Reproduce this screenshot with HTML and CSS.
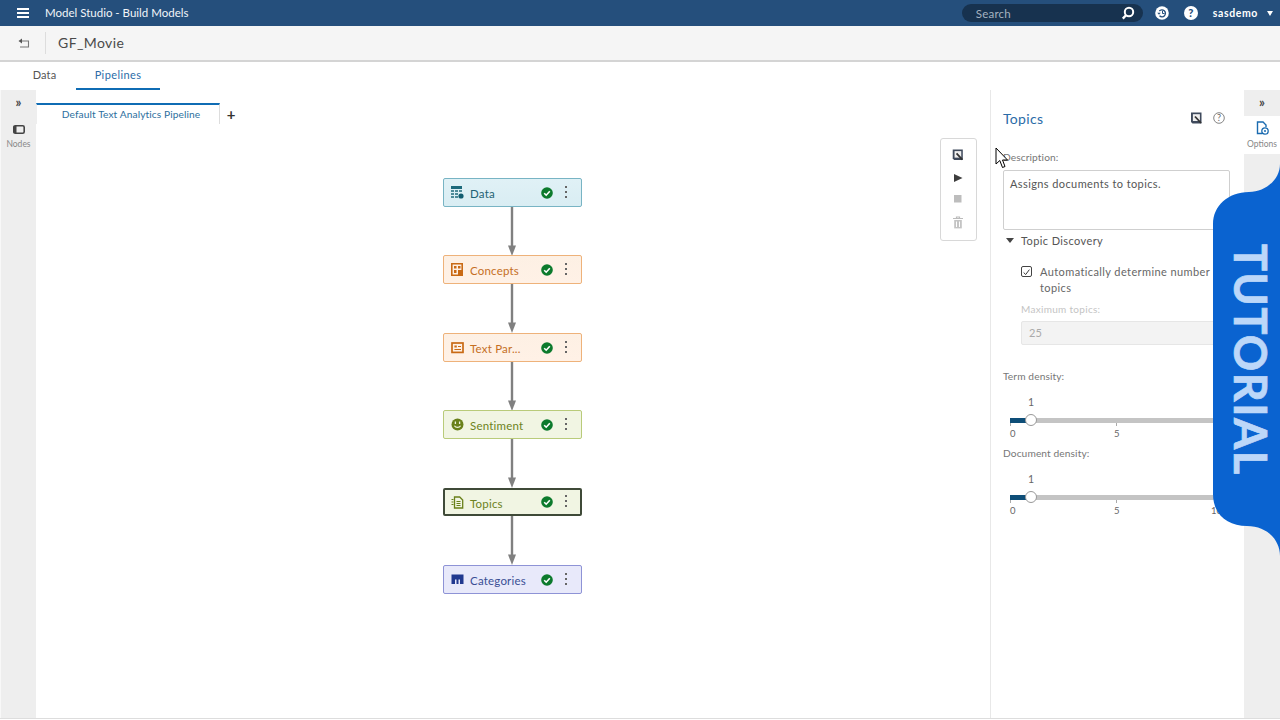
FILE: index.html
```html
<!DOCTYPE html>
<html lang="en">
<head>
<meta charset="utf-8">
<title>Model Studio - Build Models</title>
<link rel="stylesheet" href="styles.css">
</head>
<body>
<div class="app">
  <header class="topbar">
    <div class="menu-btn"><svg width="12" height="10" viewBox="0 0 12 10"><path d="M0 1h12M0 5h12M0 9h12" stroke="#fff" stroke-width="2"/></svg></div>
    <div class="app-title">Model Studio - Build Models</div>
    <div class="search"><span>Search</span><svg width="14" height="14" viewBox="0 0 14 14"><circle cx="8" cy="6" r="4.2" fill="none" stroke="#fff" stroke-width="2"/><path d="M5 9.2L1.800 12.600" stroke="#fff" stroke-width="2.400"/></svg></div>
    <svg class="top-icon" width="14" height="14" viewBox="0 0 14 14"><circle cx="7" cy="7" r="6.800" fill="#fff"/><path d="M4.300 5A3.500 3.500 0 1 1 4.500 9.800" fill="none" stroke="#254f7c" stroke-width="1.300"/><path d="M7.500 4.800v2.700h2" fill="none" stroke="#254f7c" stroke-width="1"/><path d="M2.300 6.800h3.400l-1.700 2z" fill="#254f7c"/></svg>
    <div class="help-dot">?</div>
    <div class="user">sasdemo</div>
    <div class="user-caret"></div>
  </header>

  <div class="toolbar">
    <svg class="back" width="12" height="12" viewBox="0 0 12 12"><path d="M3 4h7.500v6H2" fill="none" stroke="#777" stroke-width="1.100"/><path d="M0.500 4L4 1.400v5.200z" fill="#555"/></svg>
    <div class="tb-sep"></div>
    <div class="project">GF_Movie</div>
  </div>

  <nav class="tabs">
    <div class="tab">Data</div>
    <div class="tab active">Pipelines</div>
  </nav>

  <div class="workspace">
    <aside class="rail rail-left">
      <div class="rail-top">»</div>
      <div class="rail-item">
        <svg width="12" height="9" viewBox="0 0 12 9"><rect x="0.800" y="0.800" width="10.400" height="7.400" rx="1.500" fill="none" stroke="#444" stroke-width="1.600"/><rect x="0.500" y="1" width="3" height="7" fill="#444"/></svg>
        <span>Nodes</span>
      </div>
    </aside>

    <main class="main">
      <div class="pipe-tabs">
        <div class="pipe-tab">Default Text Analytics Pipeline</div>
        <div class="pipe-add">+</div>
      </div>
      <div class="canvas">
        <svg class="arrows" width="954" height="628" viewBox="0 0 954 628">
          <defs>
            <g id="arrow"><path d="M0 0V41" stroke="#808080" stroke-width="2.400"/><path d="M-4 38.500H4L0 49z" fill="#808080"/></g>
          </defs>
          <use href="#arrow" x="476" y="83"/>
          <use href="#arrow" x="476" y="160"/>
          <use href="#arrow" x="476" y="238"/>
          <use href="#arrow" x="476" y="315"/>
          <use href="#arrow" x="476" y="392"/>
        </svg>

        <div class="node n-teal" style="top:54px">
          <svg class="ni" width="13" height="13" viewBox="0 0 13 13"><rect x="0" y="0" width="11" height="3" fill="#1d6a7b"/><path d="M0 4h3v2H0zM4 4h3v2H4zM8 4h3v2H8zM0 7h3v2H0zM4 7h3v2H4zM0 10h3v2H0zM4 10h3v2H4z" fill="#4f8b99"/><circle cx="10" cy="10" r="2.600" fill="#125d70"/></svg>
          <span class="nl">Data</span><span class="ok"><svg width="12" height="12" viewBox="0 0 12 12"><circle cx="6" cy="6" r="5.800" fill="#0c7a2c"/><path d="M3.200 6.200l2 2 3.600-4" fill="none" stroke="#fff" stroke-width="1.600"/></svg></span><span class="dots"></span>
        </div>
        <div class="node n-orange" style="top:131px">
          <svg class="ni" width="13" height="13" viewBox="0 0 13 13"><path d="M0.800 0.800h10.400v11.400H0.800z" fill="none" stroke="#c96a15" stroke-width="1.600"/><path d="M3 3h2.500v2.500H3zM7 3h2.500v2.500H7zM3 7h2.500v3H3zM7 7h5v5H7z" fill="#c96a15"/></svg>
          <span class="nl">Concepts</span><span class="ok"><svg width="12" height="12" viewBox="0 0 12 12"><circle cx="6" cy="6" r="5.800" fill="#0c7a2c"/><path d="M3.200 6.200l2 2 3.600-4" fill="none" stroke="#fff" stroke-width="1.600"/></svg></span><span class="dots"></span>
        </div>
        <div class="node n-orange" style="top:209px">
          <svg class="ni" width="13" height="13" viewBox="0 0 13 13"><rect x="1" y="2" width="11" height="9.400" fill="none" stroke="#c96a15" stroke-width="1.700"/><path d="M3.400 4.600h2.400v2H3.400zM7 5h3v1H7zM3.400 8h6.600v1H3.400z" fill="#c96a15"/></svg>
          <span class="nl">Text Par...</span><span class="ok"><svg width="12" height="12" viewBox="0 0 12 12"><circle cx="6" cy="6" r="5.800" fill="#0c7a2c"/><path d="M3.200 6.200l2 2 3.600-4" fill="none" stroke="#fff" stroke-width="1.600"/></svg></span><span class="dots"></span>
        </div>
        <div class="node n-green" style="top:286px">
          <svg class="ni" width="13" height="13" viewBox="0 0 13 13"><circle cx="6.500" cy="6.500" r="6" fill="#69801a"/><path d="M4.400 3.400v2.600M8.600 3.400v2.600" stroke="#eef3dd" stroke-width="1.300"/><path d="M3.400 7.800c1.400 2.200 4.800 2.200 6.200 0" fill="none" stroke="#eef3dd" stroke-width="1.200"/></svg>
          <span class="nl">Sentiment</span><span class="ok"><svg width="12" height="12" viewBox="0 0 12 12"><circle cx="6" cy="6" r="5.800" fill="#0c7a2c"/><path d="M3.200 6.200l2 2 3.600-4" fill="none" stroke="#fff" stroke-width="1.600"/></svg></span><span class="dots"></span>
        </div>
        <div class="node n-green n-selected" style="top:364px">
          <svg class="ni" width="13" height="13" viewBox="0 0 13 13"><path d="M3.500 1h5.200l3 3v8h-8.200z" fill="none" stroke="#69801a" stroke-width="1.300"/><path d="M5.500 5.500h4M5.500 7.500h4M5.500 9.500h4M0.500 3.500h2M0.500 6h2M0.500 8.500h2" stroke="#69801a" stroke-width="1.200"/></svg>
          <span class="nl">Topics</span><span class="ok"><svg width="12" height="12" viewBox="0 0 12 12"><circle cx="6" cy="6" r="5.800" fill="#0c7a2c"/><path d="M3.200 6.200l2 2 3.600-4" fill="none" stroke="#fff" stroke-width="1.600"/></svg></span><span class="dots"></span>
        </div>
        <div class="node n-blue" style="top:441px">
          <svg class="ni" width="13" height="13" viewBox="0 0 13 13"><path d="M0.500 1.500h12V11H9V6.500H7.500V11h-2V6.500H4V11H0.500z" fill="#21398f"/></svg>
          <span class="nl">Categories</span><span class="ok"><svg width="12" height="12" viewBox="0 0 12 12"><circle cx="6" cy="6" r="5.800" fill="#0c7a2c"/><path d="M3.200 6.200l2 2 3.600-4" fill="none" stroke="#fff" stroke-width="1.600"/></svg></span><span class="dots"></span>
        </div>

        <div class="float-tools">
          <svg width="12" height="12" viewBox="0 0 12 12.500"><path d="M0.500 0.500h10.500v11H2L0.500 10z" fill="#3f4a5c"/><rect x="2.400" y="2.200" width="7" height="6.800" fill="#f0f0f0"/><path d="M4.500 4.500l6 6.500" stroke="#333" stroke-width="1.800"/></svg>
          <svg width="10" height="10" viewBox="0 0 10 10"><path d="M1 1L9.500 5L1 9z" fill="#3d3d3d"/></svg>
          <svg width="10" height="10" viewBox="0 0 10 10"><rect x="1" y="1" width="7.500" height="7.500" fill="#bdbdbd"/></svg>
          <svg width="12" height="13" viewBox="0 0 12 13"><path d="M1 2.500h10M4.500 2.500V1h3v1.500" fill="none" stroke="#bbb" stroke-width="1.200"/><path d="M2.200 4h7.600v8.400H2.200z" fill="#c4c4c4"/><path d="M4.500 5.500v5.500M7.500 5.500v5.500" stroke="#fff" stroke-width="1"/></svg>
        </div>
      </div>
    </main>

    <section class="panel">
      <div class="panel-head">
        <h2>Topics</h2>
        <svg class="ph-ic" width="13" height="13" viewBox="0 0 12 13"><path d="M0.500 0.500h10.500v11H2L0.500 10z" fill="#3f4a5c"/><rect x="2.400" y="2.200" width="7" height="6.800" fill="#f0f0f0"/><path d="M4.500 4.500l6 6.500" stroke="#333" stroke-width="1.800"/></svg>
        <svg class="ph-help" width="12" height="12" viewBox="0 0 12 12"><circle cx="6" cy="6" r="5.300" fill="none" stroke="#777" stroke-width="0.900"/><text x="6" y="9" text-anchor="middle" class="qm">?</text></svg>
      </div>
      <label class="lbl lbl-desc">Description:</label>
      <div class="textarea">Assigns documents to topics.</div>
      <div class="section-head"><i class="tri"></i>Topic Discovery</div>
      <div class="check-row">
        <span class="check"><svg width="11" height="11" viewBox="0 0 11 11"><path d="M2 5.500l2.500 2.500 4.500-6" fill="none" stroke="#333" stroke-width="1.200"/></svg></span>
        <span class="check-text">Automatically determine number of topics</span>
      </div>
      <label class="lbl lbl-max">Maximum topics:</label>
      <div class="num-input">25</div>

      <label class="lbl lbl-term">Term density:</label>
      <div class="slider">
        <div class="s-val">1</div>
        <div class="s-track"><div class="s-fill"></div><div class="s-thumb"></div><i class="tick t0"></i><i class="tick t5"></i></div>
        <div class="s-scale"><span class="s0">0</span><span class="s5">5</span></div>
      </div>
      <label class="lbl lbl-doc">Document density:</label>
      <div class="slider">
        <div class="s-val">1</div>
        <div class="s-track"><div class="s-fill"></div><div class="s-thumb"></div><i class="tick t0"></i><i class="tick t5"></i></div>
        <div class="s-scale"><span class="s0">0</span><span class="s5">5</span><span class="s10">10</span></div>
      </div>
    </section>

    <aside class="rail rail-right">
      <div class="rail-top">»</div>
      <div class="rail-item active">
        <svg width="13" height="14" viewBox="0 0 13 14"><path d="M6 12.500H1.500V1h5.500l3 3v2" fill="none" stroke="#1a6bb0" stroke-width="1.400"/><circle cx="9" cy="10" r="3.200" fill="none" stroke="#1a6bb0" stroke-width="1.300"/><circle cx="9" cy="10" r="1" fill="#1a6bb0"/></svg>
        <span>Options</span>
      </div>
    </aside>
  </div>
</div>

<div class="tutorial">
  <svg class="tut-shape" width="67" height="392" viewBox="0 0 67 392"><path d="M67 0C67 16 52 28 36 28C15 28 0 42 0 60V330C0 350 14 362 34 362C54 362 67 376 67 392Z" fill="#0a63d0"/></svg>
  <div class="tut-text">TUTORIAL</div>
</div>

<svg class="cursor" width="14" height="22" viewBox="0 0 14 22"><path d="M1 1V17L4.800 13.500L7.500 20.500L10 19.500L7.500 13H12.500Z" fill="#fff" stroke="#000" stroke-width="1"/></svg>
</body>
</html>
```

FILE: styles.css
```css
* { box-sizing: border-box; }
html, body { margin: 0; padding: 0; width: 1280px; height: 720px; overflow: hidden; background: #fff; }
body { font-family: Lato, "Open Sans", sans-serif; color: #555; position: relative; }
.app { display: flex; flex-direction: column; height: 719px; border-bottom: 1px solid #ddd; }

.topbar { height: 26px; background: #254f7c; display: flex; align-items: center; color: #fff; flex: none; }
.menu-btn { width: 12px; margin-left: 17px; display: flex; }
.app-title { margin-left: 16px; margin-top: -1px; font-size: 11.500px; color: #f2f5f9; }
.search { margin-left: auto; width: 181px; height: 18px; background: #17324f; border-radius: 9px; display: flex; align-items: center; justify-content: space-between; padding: 0 8px 0 14px; font-size: 11.500px; letter-spacing: 0.2px; color: #a5b2c0; }
.search span { padding-top: 1px; }
.top-icon { margin-left: 12px; }
.help-dot { margin-left: 15px; width: 14px; height: 14px; border-radius: 50%; background: #fff; color: #254f7c; font-size: 11px; font-weight: 900; text-align: center; line-height: 14px; }
.user { margin-left: 15px; margin-top: -1px; font-size: 10.500px; font-weight: 700; letter-spacing: 0.600px; }
.user-caret { margin: 0 7px 0 9px; width: 0; height: 0; border-left: 3.500px solid transparent; border-right: 3.500px solid transparent; border-top: 5px solid #fff; }

.toolbar { height: 36px; background: #f5f5f5; display: flex; align-items: center; border-bottom: 2px solid #d4d4d4; flex: none; }
.back { margin-left: 18px; }
.tb-sep { width: 1px; height: 22px; background: #ddd; margin-left: 15px; }
.project { margin-left: 12px; margin-top: -2px; font-size: 14px; color: #4a4a4a; letter-spacing: 0.4px; }

.tabs { height: 28px; display: flex; flex: none; padding-left: 15px; }
.tab { width: 59px; text-align: center; font-size: 11px; line-height: 25px; color: #555; letter-spacing: 0.1px; }
.tab.active { width: 84px; margin-left: 2px; color: #2b6ca8; border-bottom: 2px solid #0f6cb4; letter-spacing: 0.4px; }

.workspace { flex: 1; display: flex; min-height: 0; }
.rail { width: 36px; background: #eeeeee; flex: none; text-align: center; }
.rail-left { border-left: 1px solid #f8f8f8; }
.rail-top { height: 26px; line-height: 25px; font-size: 13px; color: #444; font-weight: 700; }
.rail-item { display: flex; flex-direction: column; align-items: center; font-size: 8.500px; color: #888; gap: 5px; padding-top: 9px; }
.rail-right .rail-item { background: #fff; height: 38px; padding-top: 5px; gap: 4px; }

.main { flex: 1; display: flex; flex-direction: column; min-width: 0; }
.pipe-tabs { display: flex; height: 21px; margin-top: 13px; align-items: center; flex: none; }
.pipe-tab { width: 184px; height: 21px; border-top: 2px solid #0f6cb4; border-right: 1px solid #ddd; border-left: 1px solid #eee; padding-left: 6px; text-align: center; font-size: 10.200px; line-height: 18px; letter-spacing: 0.1px; color: #2d6f9e; }
.pipe-add { margin-left: 5px; width: 12px; font-size: 15px; line-height: 18px; color: #333; font-weight: 700; text-align: center; }
.canvas { position: relative; flex: 1; }
.arrows { position: absolute; left: 0; top: 0; }

.node { position: absolute; left: 407px; width: 139px; height: 29px; border: 1px solid; border-radius: 2px; display: flex; align-items: center; padding: 0 0 0 7px; font-size: 11.500px; letter-spacing: 0.2px; }
.ni { flex: none; }
.nl { margin-left: 6px; flex: 1; padding-top: 2px; }
.ok { display: flex; margin-right: 12px; }
.dots { width: 2px; height: 14px; margin-right: 14px; background: radial-gradient(circle at 1px 1px, #666 0.900px, transparent 1.100px) 0 0 / 2px 5px repeat-y; }
.n-teal { background: linear-gradient(#e0f1f6, #d9edf3); border-color: #78b4c4; color: #1f6273; }
.n-orange { background: linear-gradient(#fdf0e4, #fff1e6); border-color: #eeb27a; color: #c56f1f; }
.n-green { background: #f1f5e3; border-color: #b9cb7a; color: #6d8221; }
.n-blue { background: #e8e9fa; border-color: #8e93d6; color: #3a4f95; }
.n-selected { height: 28px; border: 2px solid #3f4a38; padding-left: 6px; }
.n-selected .dots { margin-right: 13px; }

.float-tools { position: absolute; left: 904px; top: 14px; width: 37px; height: 103px; background: #fff; border: 1px solid #d8d8d8; border-radius: 3px; display: flex; flex-direction: column; align-items: center; gap: 11.500px; padding: 10px 2px 0 0; }

.panel { width: 254px; border-left: 1px solid #e8e8e8; flex: none; padding: 0 0 0 12px; display: flex; flex-direction: column; overflow: hidden; }
.panel-head { display: flex; align-items: center; height: 20px; margin-top: 18px; padding-right: 19px; }
.panel-head h2 { margin: 0 auto 0 0; font-size: 14px; font-weight: 400; color: #2b6ca8; letter-spacing: 0.3px; }
.ph-ic { margin-right: 10px; }
.qm { font-size: 9px; fill: #666; font-family: Lato, sans-serif; }
.lbl { display: block; font-size: 10.200px; color: #777; line-height: 13px; letter-spacing: 0.1px; }
.lbl-desc { margin-top: 23px; }
.textarea { margin-top: 6px; width: 227px; height: 60px; border: 1px solid #cfcfcf; border-radius: 2px; padding: 6px 6px; font-size: 11px; color: #555; line-height: 14px; letter-spacing: 0.400px; flex: none; }
.section-head { display: flex; align-items: center; margin-top: 3px; height: 15px; font-size: 11px; color: #555; letter-spacing: 0.400px; }
.tri { width: 0; height: 0; border-left: 4px solid transparent; border-right: 4px solid transparent; border-top: 5px solid #444; margin: 0 7px 0 3px; }
.check-row { display: flex; margin: 16px 0 0 18px; width: 205px; font-size: 11px; line-height: 16px; color: #666; letter-spacing: 0.400px; flex: none; }
.check-text { width: 185px; white-space: normal; }
.check { width: 11px; height: 11px; border: 1px solid #444; border-radius: 2px; flex: none; margin: 2px 8px 0 0; display: flex; }
.lbl-max { margin: 7px 0 0 18px; color: #c4c4c4; font-size: 10px; letter-spacing: 0.3px; }
.num-input { margin: 5px 0 0 18px; width: 210px; height: 24px; background: #f3f3f3; border: 1px solid #e6e6e6; border-radius: 2px; font-size: 11px; line-height: 22px; padding-left: 7px; color: #aaa; flex: none; }
.lbl-term { margin-top: 25px; }
.lbl-doc { margin-top: 0; }
.slider { height: 64px; flex: none; position: relative; }
.s-val { position: absolute; left: 25px; top: 13px; font-size: 10.500px; color: #666; }
.s-track { position: absolute; left: 7px; top: 35px; width: 230px; height: 5px; background: #c4c4c4; }
.s-fill { position: absolute; left: 0; top: 0; width: 16px; height: 5px; background: #0e4e78; }
.s-thumb { position: absolute; left: 15px; top: -4px; width: 12px; height: 12px; border-radius: 50%; background: #fff; border: 1px solid #999; }
.tick { position: absolute; top: 5px; width: 1px; height: 3px; background: #aaa; }
.t0 { left: 0; }
.t5 { left: 106px; }
.s-scale { position: absolute; left: 0; top: 45px; width: 240px; height: 13px; font-size: 9.500px; color: #666; }
.s-scale span { position: absolute; top: 0; }
.s0 { left: 7px; }
.s5 { left: 111px; }
.s10 { left: 208px; }

.tutorial { position: absolute; left: 1213px; top: 164px; width: 67px; height: 392px; }
.tut-shape { display: block; }
.tut-text { position: absolute; left: 19px; top: 80px; writing-mode: vertical-rl; font-family: Lato, sans-serif; font-weight: 700; font-size: 45px; line-height: 37px; letter-spacing: 1.500px; -webkit-text-stroke: 0.700px #bcd7f9; color: #bcd7f9; }
.cursor { position: absolute; left: 995px; top: 147px; }
```
